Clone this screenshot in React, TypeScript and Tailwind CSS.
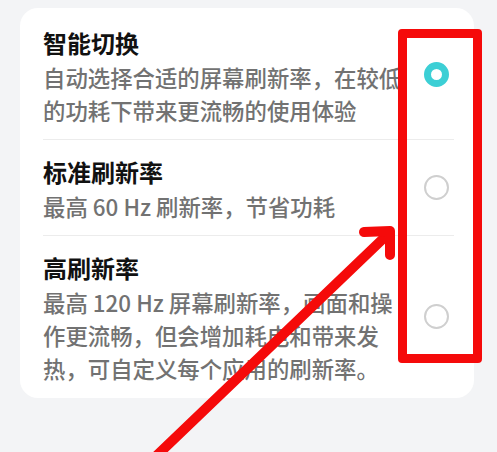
import React from 'react';

const font = { fontFamily: '"Noto Sans CJK SC", "Noto Sans", sans-serif' };

type Option = { title: string; lines: string[]; checked?: boolean };

const options: Option[] = [
  { title: '智能切换', lines: ['自动选择合适的屏幕刷新率，在较低', '的功耗下带来更流畅的使用体验'], checked: true },
  { title: '标准刷新率', lines: ['最高 60 Hz 刷新率，节省功耗'] },
  { title: '高刷新率', lines: ['最高 120 Hz 屏幕刷新率，画面和操', '作更流畅，但会增加耗电和带来发', '热，可自定义每个应用的刷新率。'] },
];

function Radio({ checked }: { checked?: boolean }) {
  if (checked) {
    return <div className="w-[25px] h-[25px] rounded-full border-[7px] border-[#3ccfd5] bg-white" />;
  }
  return <div className="w-[25px] h-[25px] rounded-full border-2 border-[#cfcfcf] bg-white" />;
}

export default function App() {
  return (
    <div className="relative w-[497px] h-[452px] bg-[#f3f4f6] overflow-hidden pt-2 pl-5" style={font}>
      <div className="w-[454px] bg-white rounded-[18px] pl-[23px] pr-[26px] pt-[18px] pb-[13px]">
        {options.map((o, i) => (
          <div key={o.title}>
            {i > 0 && <div className="h-px bg-[#ececec] mr-[-6px]" />}
            <div className={`flex items-center justify-between ${i > 0 ? 'pt-[15px]' : ''} ${i < options.length - 1 ? 'pb-[12px]' : ''}`}>
              <div>
                <div className="text-[24px] leading-[33px] font-bold text-[#111111] mb-[2px]">{o.title}</div>
                {o.lines.map(l => (
                  <div key={l} className="text-[22.4px] leading-[33px] font-medium text-[#727272] whitespace-nowrap">{l}</div>
                ))}
              </div>
              <div className="mr-[-1px] -mt-1">
                <Radio checked={o.checked} />
              </div>
            </div>
          </div>
        ))}
      </div>

      {/* red annotation */}
      <div className="absolute left-[398px] top-[29px] w-[84px] h-[334px] border-[9px] border-[#f50a0a] rounded-[4px]" />
      <svg className="absolute left-0 top-0" width="497" height="452" viewBox="0 0 497 452">
        <g stroke="#f50a0a" strokeWidth="10" strokeLinecap="round" strokeLinejoin="round" fill="none">
          <line x1="388" y1="234" x2="150" y2="462" />
          <polyline points="364,232 390,231 390,255" />
        </g>
      </svg>
    </div>
  );
}
